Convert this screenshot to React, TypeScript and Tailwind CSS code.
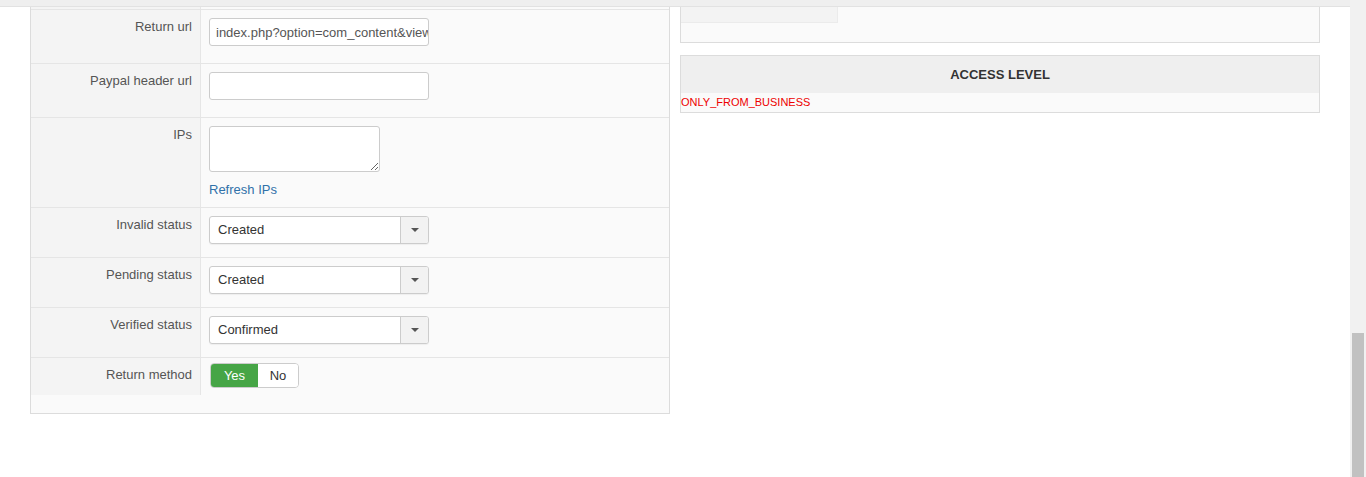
import React from "react";

const FONT = "font-['Liberation_Sans',Arial,sans-serif]";

function Label({ children }: { children: React.ReactNode }) {
  return (
    <div className="w-[170px] shrink-0 border-r border-[#e6e6e6] bg-[#f4f4f4] pr-[8px] pt-[8px] text-right text-[13px] leading-[18px] text-[#555]">
      {children}
    </div>
  );
}

function TextInput({ value = "" }: { value?: string }) {
  return (
    <input
      readOnly
      value={value}
      className="block h-[28px] w-[220px] rounded-[3px] border border-[#ccc] bg-white pl-[6px] text-[13px] text-[#555] outline-none"
    />
  );
}

function Select({ value }: { value: string }) {
  return (
    <div className="flex h-[28px] w-[220px] overflow-hidden rounded-[3px] border border-[#ccc] bg-white shadow-[0_1px_1px_rgba(0,0,0,0.05)]">
      <div className="flex-1 pl-[8px] text-[13px] leading-[26px] text-[#333]">{value}</div>
      <div className="flex w-[28px] items-center justify-center border-l border-[#ccc] bg-[#f2f2f2]">
        <span className="h-0 w-0 border-x-[4px] border-t-[4px] border-x-transparent border-t-[#555]" />
      </div>
    </div>
  );
}

function Row({
  label,
  height,
  children,
}: {
  label: string;
  height: string;
  children: React.ReactNode;
}) {
  return (
    <div className={`flex border-t border-[#e5e5e5] ${height}`}>
      <Label>{label}</Label>
      <div className="flex-1 pl-[8px] pt-[8px]">{children}</div>
    </div>
  );
}

const STATUS_ROWS = [
  { label: "Invalid status", value: "Created" },
  { label: "Pending status", value: "Created" },
  { label: "Verified status", value: "Confirmed" },
];

export default function App() {
  return (
    <div className={`flex h-[477px] overflow-hidden bg-white ${FONT}`}>
      <div className="flex-1">
        {/* toolbar edge above the scrolled content */}
        <div className="h-[7px] border-b border-[#e2e2e2] bg-[#efefef]" />

        <div className="flex gap-[10px] px-[30px]">
          {/* payment settings form */}
          <div className="w-[640px] border-x border-b border-[#dcdcdc] bg-[#fafafa]">
            <div className="flex h-[2px]">
              <div className="w-[170px] border-r border-[#e6e6e6] bg-[#f4f4f4]" />
            </div>

            <Row label="Return url" height="h-[54px]">
              <TextInput value="index.php?option=com_content&view=article&id=1" />
            </Row>

            <Row label="Paypal header url" height="h-[54px]">
              <TextInput />
            </Row>

            <Row label="IPs" height="h-[90px]">
              <textarea
                readOnly
                className="block h-[46px] w-[171px] rounded-[3px] border border-[#ccc] bg-white"
              />
              <a href="#" className="mt-[9px] block text-[13px] leading-[18px] text-[#3071a9]">
                Refresh IPs
              </a>
            </Row>

            {STATUS_ROWS.map((row) => (
              <Row key={row.label} label={row.label} height="h-[50px]">
                <Select value={row.value} />
              </Row>
            ))}

            <div className="flex h-[38px] border-t border-[#e5e5e5]">
              <Label>Return method</Label>
              <div className="flex-1 pl-[9px] pt-[5px]">
                <div className="flex h-[25px] w-[89px] overflow-hidden rounded-[4px] border border-[#ccc] text-[13px] leading-[23px]">
                  <div className="w-[47px] bg-[#46a546] text-center text-white">Yes</div>
                  <div className="flex-1 bg-white text-center text-[#333]">No</div>
                </div>
              </div>
            </div>

            <div className="h-[18px]" />
          </div>

          {/* side panels */}
          <div className="flex w-[640px] flex-col gap-[12px]">
            <div className="h-[36px] border-x border-b border-[#dcdcdc] bg-[#fafafa]">
              <div className="h-[16px] w-[157px] border-b border-r border-[#ebebeb] bg-[#f3f3f3]" />
            </div>

            <div className="border border-[#dcdcdc] bg-[#fafafa]">
              <div className="flex h-[37px] items-center justify-center bg-[#efefef] text-[13px] font-bold text-[#333]">
                ACCESS LEVEL
              </div>
              <div className="h-[19px] text-[11px] leading-[19px] text-[#e00]">
                ONLY_FROM_BUSINESS
              </div>
            </div>
          </div>
        </div>
      </div>

      {/* page scrollbar */}
      <div className="flex w-[17px] flex-col justify-end bg-[#f1f1f1] px-[2px]">
        <div className="h-[144px] bg-[#c1c1c1]" />
      </div>
    </div>
  );
}
